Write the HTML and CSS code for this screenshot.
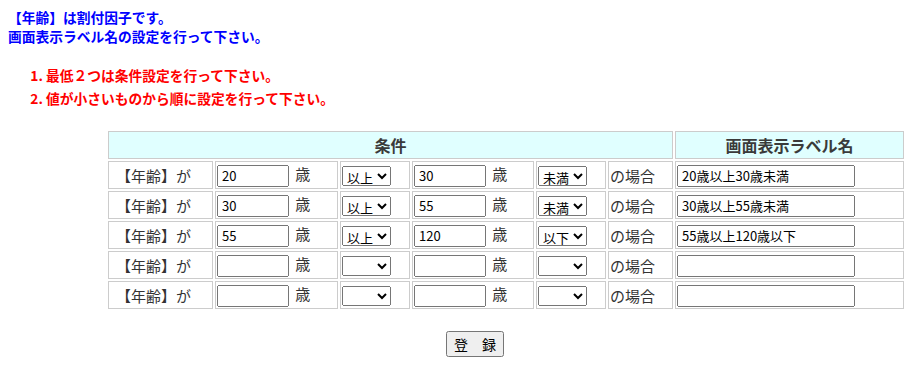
FILE: index.html
```html
<!DOCTYPE html>
<html>
  <head>
    <meta charset="utf-8" />
    <link rel="stylesheet" href="styles.css">
  </head>
  <body>
    <p class="notice">【年齢】は割付因子です。<br />画面表示ラベル名の設定を行って下さい。</p>

    <ol class="steps">
      <li>最低２つは条件設定を行って下さい。</li>
      <li>値が小さいものから順に設定を行って下さい。</li>
    </ol>

    <table class="cond">
      <colgroup>
        <col class="c-name" />
        <col class="c-from" />
        <col class="c-op" />
        <col class="c-to" />
        <col class="c-op2" />
        <col class="c-case" />
        <col class="c-label" />
      </colgroup>
      <tr>
        <th colspan="6">条件</th>
        <th>画面表示ラベル名</th>
      </tr>
      <tr>
        <td class="name">【年齢】が</td>
        <td><input type="text" class="age" value="20" /> 歳</td>
        <td><select class="op"><option></option><option selected>以上</option><option>超</option></select></td>
        <td><input type="text" class="age" value="30" /> 歳</td>
        <td><select class="op"><option></option><option selected>未満</option><option>以下</option></select></td>
        <td>の場合</td>
        <td><input type="text" class="label" value="20歳以上30歳未満" /></td>
      </tr>
      <tr>
        <td class="name">【年齢】が</td>
        <td><input type="text" class="age" value="30" /> 歳</td>
        <td><select class="op"><option></option><option selected>以上</option><option>超</option></select></td>
        <td><input type="text" class="age" value="55" /> 歳</td>
        <td><select class="op"><option></option><option selected>未満</option><option>以下</option></select></td>
        <td>の場合</td>
        <td><input type="text" class="label" value="30歳以上55歳未満" /></td>
      </tr>
      <tr>
        <td class="name">【年齢】が</td>
        <td><input type="text" class="age" value="55" /> 歳</td>
        <td><select class="op"><option></option><option selected>以上</option><option>超</option></select></td>
        <td><input type="text" class="age" value="120" /> 歳</td>
        <td><select class="op"><option></option><option>未満</option><option selected>以下</option></select></td>
        <td>の場合</td>
        <td><input type="text" class="label" value="55歳以上120歳以下" /></td>
      </tr>
      <tr>
        <td class="name">【年齢】が</td>
        <td><input type="text" class="age" value="" /> 歳</td>
        <td><select class="op"><option selected></option><option>以上</option><option>超</option></select></td>
        <td><input type="text" class="age" value="" /> 歳</td>
        <td><select class="op"><option selected></option><option>未満</option><option>以下</option></select></td>
        <td>の場合</td>
        <td><input type="text" class="label" value="" /></td>
      </tr>
      <tr>
        <td class="name">【年齢】が</td>
        <td><input type="text" class="age" value="" /> 歳</td>
        <td><select class="op"><option selected></option><option>以上</option><option>超</option></select></td>
        <td><input type="text" class="age" value="" /> 歳</td>
        <td><select class="op"><option selected></option><option>未満</option><option>以下</option></select></td>
        <td>の場合</td>
        <td><input type="text" class="label" value="" /></td>
      </tr>
    </table>

    <div class="actions">
      <button type="button" class="submit">登　録</button>
    </div>
  </body>
</html>
```

FILE: styles.css
```css
body {
  margin: 8px;
  font-family: "Noto Sans CJK JP", sans-serif;
  font-size: 13.75px;
}

.notice {
  margin: 0;
  color: #0000ff;
  font-weight: bold;
  line-height: 19px;
}

.steps {
  margin: 18px 0 0;
  padding-left: 38px;
  color: #ff0000;
  font-weight: bold;
}

.steps li {
  line-height: 23px;
}

.cond {
  width: 800px;
  margin: 19px 0 0 98px;
  table-layout: fixed;
  border-collapse: separate;
  border-spacing: 2px;
  color: #333;
  font-size: 15px;
}

.c-name { width: 105px; }
.c-from { width: 123px; }
.c-op { width: 70px; }
.c-to { width: 122px; }
.c-op2 { width: 70px; }
.c-case { width: 65px; }
.c-label { width: 229px; }

.cond th,
.cond td {
  box-sizing: border-box;
  height: 28px;
  padding: 1px;
  border: 1px solid #ccc;
  white-space: nowrap;
}

.cond th {
  background: #e0ffff;
  color: #3a3a3a;
  font-size: 16px;
  text-align: center;
}

.cond td.name {
  padding-left: 7px;
}

.age,
.label {
  box-sizing: border-box;
  height: 22px;
  padding: 1px 3px;
  font-family: "Noto Sans CJK JP", sans-serif;
  font-size: 13px;
  vertical-align: middle;
}

.age {
  width: 72px;
  margin-right: 3px;
}

.label {
  width: 178px;
}

.op {
  box-sizing: border-box;
  width: 49px;
  height: 20px;
  font-family: "Noto Sans CJK JP", sans-serif;
  font-size: 13px;
  vertical-align: middle;
}

.actions {
  width: 934px;
  margin-top: 20px;
  text-align: center;
}

.submit {
  font-family: "Noto Sans CJK JP", sans-serif;
  font-size: 14px;
  padding: 1px 6px;
}
```
